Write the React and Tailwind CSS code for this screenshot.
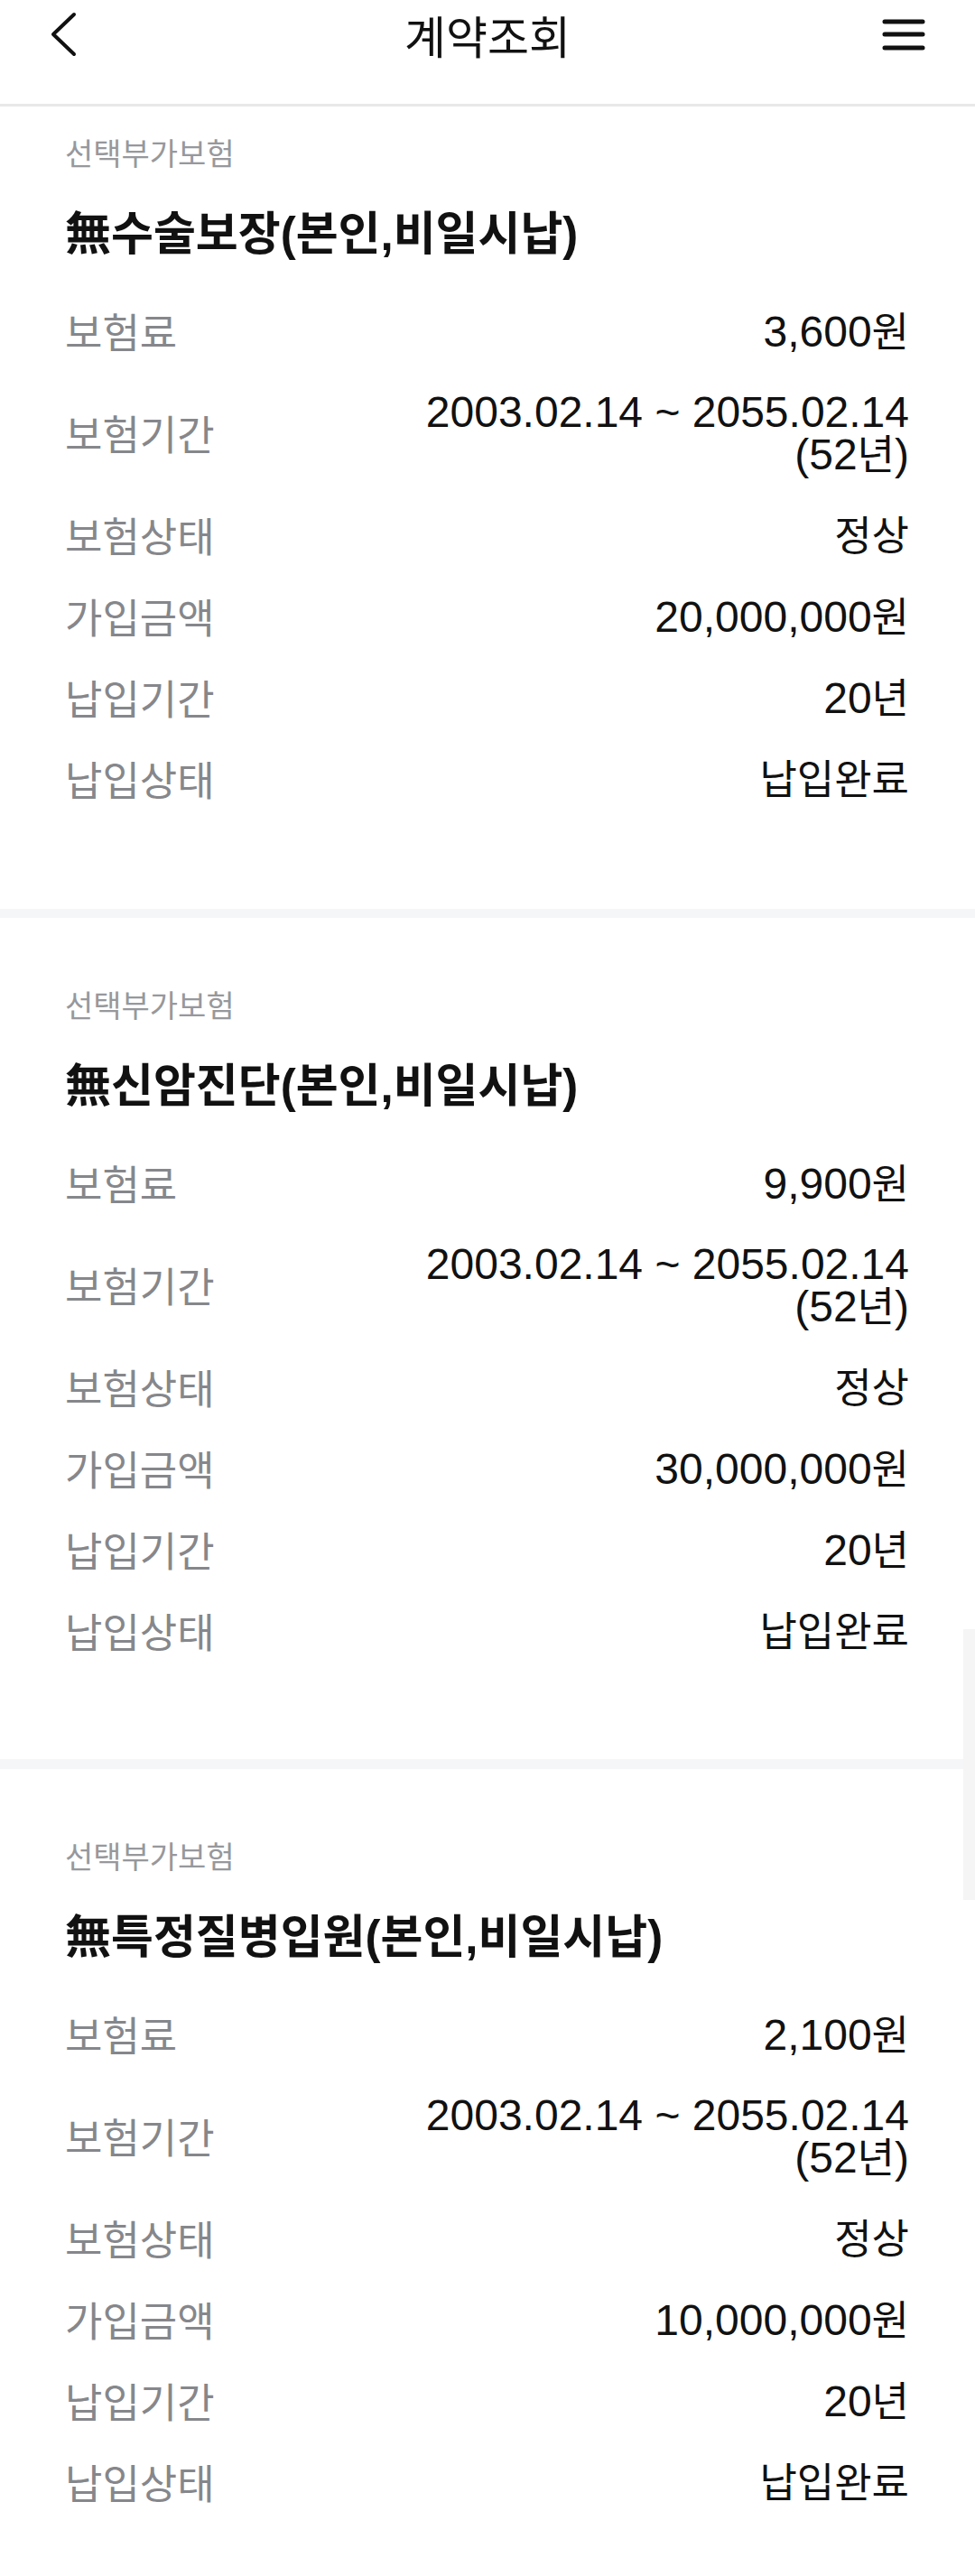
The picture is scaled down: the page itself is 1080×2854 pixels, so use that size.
import React from 'react';

const sections = [
  {
    title: '無수술보장(본인,비일시납)',
    premium: '3,600원',
    amount: '20,000,000원',
  },
  {
    title: '無신암진단(본인,비일시납)',
    premium: '9,900원',
    amount: '30,000,000원',
  },
  {
    title: '無특정질병입원(본인,비일시납)',
    premium: '2,100원',
    amount: '10,000,000원',
  },
];

// hangul in the value column is set a bit smaller than the digits
const Mixed = ({ text }) =>
  text.split(/([가-힣]+)/).map((part, i) =>
    /[가-힣]/.test(part) ? (
      <span key={i} className="text-[45px] leading-none">
        {part}
      </span>
    ) : (
      <React.Fragment key={i}>{part}</React.Fragment>
    )
  );

const Row = ({ label, lines }) => (
  <div className="flex items-center justify-between py-[21px]">
    <span className="h-[48px] text-[45px] leading-[48px] text-[#86878b] font-['Noto_Sans_CJK_KR',sans-serif]">
      {label}
    </span>
    <div className="text-right text-[48px] leading-[47px] text-[#111] font-['Liberation_Sans','Noto_Sans_CJK_KR',sans-serif]">
      {lines.map((l, i) => (
        <div key={i} className="h-[47px] whitespace-nowrap">
          <Mixed text={l} />
        </div>
      ))}
    </div>
  </div>
);

const Section = ({ data, top }) => (
  <section className={`pl-[72px] pr-[73px] ${top ? 'pt-[31px] pb-[99px]' : 'pt-[76px] pb-[97px]'}`}>
    <div className="h-[40px] text-[34px] leading-[40px] text-[#97989c] font-['Noto_Sans_CJK_KR',sans-serif]">
      선택부가보험
    </div>
    <h2 className="mt-[41px] h-[60px] text-[51px] leading-[60px] font-bold text-[#111] font-['Liberation_Sans','Noto_Sans_CJK_KR',sans-serif]">
      {data.title}
    </h2>
    <div className="mt-[32px]">
      <Row label="보험료" lines={[data.premium]} />
      <Row label="보험기간" lines={['2003.02.14 ~ 2055.02.14', '(52년)']} />
      <Row label="보험상태" lines={['정상']} />
      <Row label="가입금액" lines={[data.amount]} />
      <Row label="납입기간" lines={['20년']} />
      <Row label="납입상태" lines={['납입완료']} />
    </div>
  </section>
);

const App = () => {
  return (
    <div className="relative w-[1080px] h-[2854px] overflow-hidden bg-white">
      <header className="h-[118px] border-b-[3px] border-[#e8e8e8]">
        <div className="grid h-[76px] grid-cols-[1fr_auto_1fr] items-center">
          <div className="pl-[54px]">
            <svg width="34" height="50" viewBox="0 0 34 50" fill="none">
              <path d="M28 3 L5 25 L28 47" stroke="#111" strokeWidth="4" strokeLinecap="round" strokeLinejoin="round" />
            </svg>
          </div>
          <h1 className="text-[50px] leading-[60px] text-[#111] font-['Noto_Sans_CJK_KR',sans-serif]">
            계약조회
          </h1>
          <div className="flex justify-end pr-[54px]">
            <svg width="50" height="48" viewBox="0 0 50 48" fill="none">
              <path d="M4 10 H46 M4 24 H46 M4 39 H46" stroke="#111" strokeWidth="5" strokeLinecap="round" />
            </svg>
          </div>
        </div>
      </header>

      <Section data={sections[0]} top />
      <div className="h-[10px] bg-[#f5f6f8]" />
      <Section data={sections[1]} />
      <div className="h-[11px] bg-[#f5f6f8]" />
      <Section data={sections[2]} />

      {/* scroll indicator */}
      <div className="absolute right-0 top-[1805px] h-[300px] w-[13px] bg-[#f5f5f5]" />
    </div>
  );
};

export default App;
